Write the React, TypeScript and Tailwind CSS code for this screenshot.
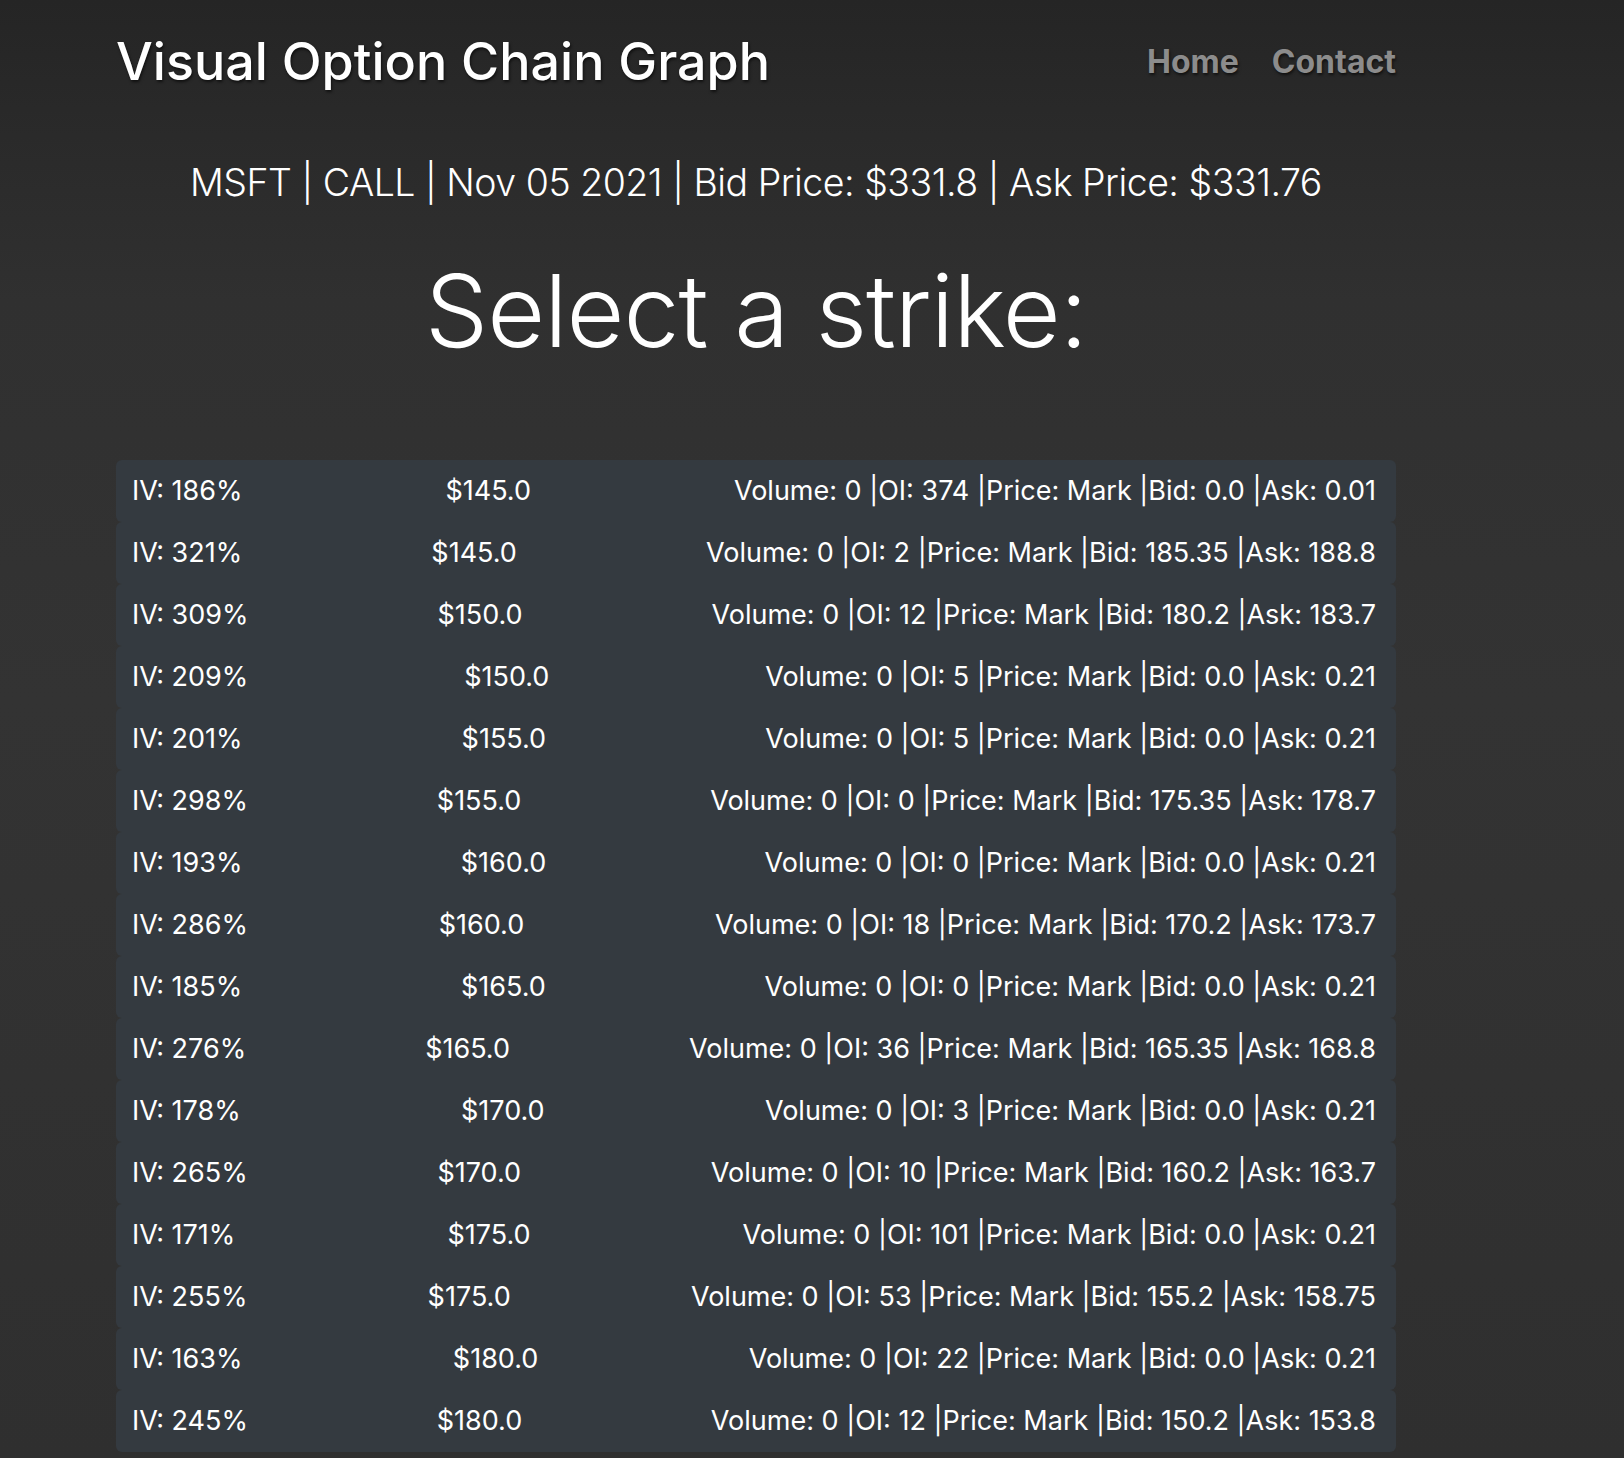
const rows = [
  ["186", "145.0", "Volume: 0 |OI: 374 |Price: Mark |Bid: 0.0 |Ask: 0.01"],
  ["321", "145.0", "Volume: 0 |OI: 2 |Price: Mark |Bid: 185.35 |Ask: 188.8"],
  ["309", "150.0", "Volume: 0 |OI: 12 |Price: Mark |Bid: 180.2 |Ask: 183.7"],
  ["209", "150.0", "Volume: 0 |OI: 5 |Price: Mark |Bid: 0.0 |Ask: 0.21"],
  ["201", "155.0", "Volume: 0 |OI: 5 |Price: Mark |Bid: 0.0 |Ask: 0.21"],
  ["298", "155.0", "Volume: 0 |OI: 0 |Price: Mark |Bid: 175.35 |Ask: 178.7"],
  ["193", "160.0", "Volume: 0 |OI: 0 |Price: Mark |Bid: 0.0 |Ask: 0.21"],
  ["286", "160.0", "Volume: 0 |OI: 18 |Price: Mark |Bid: 170.2 |Ask: 173.7"],
  ["185", "165.0", "Volume: 0 |OI: 0 |Price: Mark |Bid: 0.0 |Ask: 0.21"],
  ["276", "165.0", "Volume: 0 |OI: 36 |Price: Mark |Bid: 165.35 |Ask: 168.8"],
  ["178", "170.0", "Volume: 0 |OI: 3 |Price: Mark |Bid: 0.0 |Ask: 0.21"],
  ["265", "170.0", "Volume: 0 |OI: 10 |Price: Mark |Bid: 160.2 |Ask: 163.7"],
  ["171", "175.0", "Volume: 0 |OI: 101 |Price: Mark |Bid: 0.0 |Ask: 0.21"],
  ["255", "175.0", "Volume: 0 |OI: 53 |Price: Mark |Bid: 155.2 |Ask: 158.75"],
  ["163", "180.0", "Volume: 0 |OI: 22 |Price: Mark |Bid: 0.0 |Ask: 0.21"],
  ["245", "180.0", "Volume: 0 |OI: 12 |Price: Mark |Bid: 150.2 |Ask: 153.8"],
];

const App = () => {
  return (
    <div className="min-h-screen bg-[linear-gradient(to_bottom,#252525_0px,#303030_300px,#333333_700px,#2f2f2f_1458px)] font-['Inter','Liberation_Sans',sans-serif] text-white">
      <div className="ml-[116px] w-[1280px]">
        <header className="flex items-center justify-between pt-[33px]">
          <h1 className="text-[52px] leading-[58px] font-medium [text-shadow:1px_2px_3px_rgba(0,0,0,0.6)]">
            Visual Option Chain Graph
          </h1>
          <nav className="flex gap-[33px] text-[32px] font-bold text-[#8c8c8c] [text-shadow:1px_2px_3px_rgba(0,0,0,0.6)]">
            <a>Home</a>
            <a>Contact</a>
          </nav>
        </header>

        <p className="mt-[70px] text-center text-[37.5px] leading-[44px] font-light tracking-[-0.5px]">
          MSFT | CALL | Nov 05 2021 | Bid Price: $331.8 | Ask Price: $331.76
        </p>

        <h2 className="mt-[48px] text-center text-[100px] leading-[116px] font-light tracking-[-1px]">
          Select a strike:
        </h2>

        <ul className="mt-[91px]">
          {rows.map(([iv, strike, info], i) => (
            <li
              key={i}
              className="flex h-[62px] items-center justify-between rounded-[6px] bg-[#343a40] pl-4 pr-5 text-[27px]"
            >
              <span>IV: {iv}%</span>
              <span>${strike}</span>
              <span>{info}</span>
            </li>
          ))}
        </ul>
      </div>
    </div>
  );
};

export default App;
